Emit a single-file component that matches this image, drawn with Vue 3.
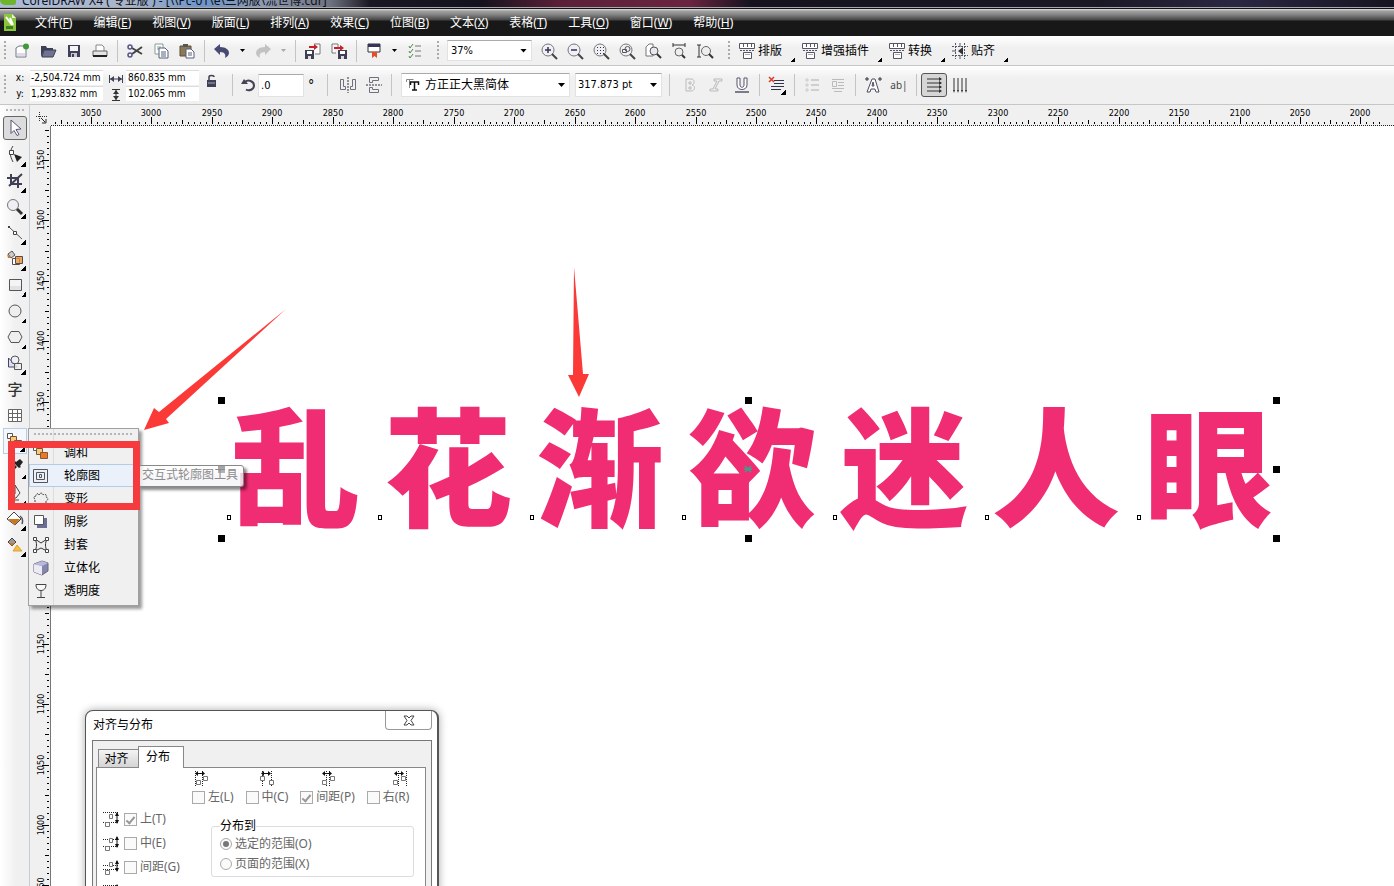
<script setup>
import { computed, h, onBeforeUnmount, onMounted, ref } from 'vue'

const C = '#3f3f55'
const svgs = {
  new: `<path d="M3 6l3-2h7v11H3z" fill="#fff" stroke="#77778a"/><path d="M4 11h8v3H4z" fill="#dcdce6"/><circle cx="13" cy="4.500" r="3" fill="#3f9b35"/>`,
  open: `<path d="M2 4h5l1 2h6v3H5l-3 6z" fill="${C}"/><path d="M5 8h12l-3 7H3z" fill="#6d7390" stroke="${C}"/>`,
  save: `<path d="M3 3h12v12H3z" fill="${C}"/><path d="M5 4h8v5H5z" fill="#f4f4f8"/><path d="M6 11h6v4H6z" fill="#c9c9d6"/><path d="M7 12h2v3H7z" fill="${C}"/>`,
  print: `<path d="M5 9V3h6l2 2v4" fill="#fff" stroke="#888"/><path d="M2 9h14v5H2z" fill="#e5e5e5" stroke="#666"/><path d="M2 14h14" stroke="#222" stroke-width="2"/>`,
  cut: `<path d="M6 6l10 6M6 12l10-7" stroke="#444" stroke-width="2"/><circle cx="4" cy="5" r="2" fill="none" stroke="#55558a" stroke-width="1.500"/><circle cx="4" cy="13" r="2" fill="none" stroke="#55558a" stroke-width="1.500"/>`,
  copy: `<path d="M3 2h8v10H3z" fill="#fff" stroke="#8a9a9a"/><path d="M5 5h4M5 7h3" stroke="#7aa59a"/><path d="M7 6h6l3 3v7H7z" fill="#fff" stroke="#55607c"/><path d="M9 10h5M9 12h5M9 14h5" stroke="#55607c"/>`,
  paste: `<path d="M2 4h11v10H2z" fill="#8a7a5c" stroke="#5c4c33"/><path d="M5 2h5v3H5z" fill="#555"/><path d="M8 7h5l3 3v6H8z" fill="#fff" stroke="#55607c"/><path d="M10 11h4M10 13h4" stroke="#55607c"/>`,
  undo: `<path d="M1 7l6-5v3c6 0 9 3 9 6 0 2-2 4-4 5 1-3 0-6-5-6v3z" fill="#484a72"/>`,
  redo: `<path d="M17 7l-6-5v3C5 5 2 8 2 11c0 2 2 4 4 5-1-3 0-6 5-6v3z" fill="#c2c2c2"/>`,
  import: `<path d="M10 2h6v10h-5" fill="#fff" stroke="#777"/><path d="M1 8h9v9H1z" fill="${C}"/><path d="M3 9h5v3H3z" fill="#fff"/><path d="M4 14h3v3H4z" fill="#ddd"/><path d="M5 4h5V2l4 3-4 3V6H5z" fill="#c8202a"/>`,
  export: `<path d="M2 2h6v3M2 2v9h4" fill="#fff" stroke="#777"/><path d="M8 8h9v9H8z" fill="${C}"/><path d="M10 9h5v3h-5z" fill="#fff"/><path d="M11 14h3v3h-3z" fill="#ddd"/><path d="M4 5h6V3l4 3-4 3V7H4z" fill="#c8202a"/>`,
  launch: `<path d="M3 2h12v8H3z" fill="#fff" stroke="#333"/><path d="M3 2h12v3H3z" fill="#33335c"/><path d="M7 10h5v6l-2.500-2L7 16z" fill="#e0502a"/>`,
  options: `<path d="M9 4h6M9 9h6M9 14h6" stroke="#777"/><path d="M3 4l1 2 3-4M3 9l1 2 3-4M3 14l1 2 3-4" stroke="#4f8a4a" fill="none"/>`,
  zin: mag('<path d="M5 8h6M8 5v6" stroke="#33334d" stroke-width="1.500"/>'),
  zout: mag('<path d="M5 8h6" stroke="#33334d" stroke-width="1.500"/>'),
  zsel: mag('<path d="M5 5.500h7M5 8.500h7M5 11.500h7" stroke="#333" stroke-dasharray="1 2"/>'),
  zall: mag('<path d="M4.500 7.500h4v3h-4z" fill="none" stroke="#555"/><circle cx="9.500" cy="7" r="2.500" fill="none" stroke="#555"/>'),
  zpage: `<path d="M2 14V5l3-3h4v12z" fill="#fff" stroke="#777"/><circle cx="10" cy="9" r="4" fill="#e8e8f0" stroke="#555"/><path d="M13 12l4 4" stroke="#333" stroke-width="2"/>`,
  zwidth: `<path d="M3 3h12M3 1v4M15 1v4" stroke="#333"/><circle cx="9" cy="10" r="4" fill="#eee" stroke="#666"/><path d="M12 13l3 3" stroke="#333" stroke-width="2"/>`,
  zheight: `<path d="M3 3v12M1 3h4M1 15h4" stroke="#333"/><circle cx="10" cy="9" r="4.500" fill="#eee" stroke="#666"/><path d="M13 12l4 4" stroke="#333" stroke-width="2"/>`,
  plug: `<path d="M1.500 1.500h15v5h-15zM5.500 10.500h8v6h-8z" fill="#fff" stroke="#555566"/><path d="M5.500 2v3M9.500 2v3M13.500 2v3" stroke="#555566"/><path d="M2 8.500h14" stroke="#555566" stroke-dasharray="2 1"/><path d="M7 12.500h5" stroke="#aab"/>`,
  snap: `<path d="M4.500 1v16M13.500 1v16M1 4.500h16M1 13.500h16" stroke="#55556a" stroke-dasharray="2 1"/><path d="M9 1v4M9 13v4M1 9h4" stroke="#55556a"/><path d="M12 5v8L7 9z" fill="#333"/>`,
  hsize: `<path d="M3 9h12M2.500 5v8M15.500 5v8" stroke="${C}"/><path d="M3 9l4-3v6zM15 9l-4-3v6z" fill="${C}"/>`,
  vsize: `<path d="M9 4v10M5 3.500h8M5 14.500h8" stroke="#333"/><path d="M9 4L6 8h6zM9 14l-3-4h6z" fill="#333"/>`,
  lock: `<path d="M4 8h9v7H4z" fill="${C}"/><path d="M6 8V5c0-2 5-2 5 0" fill="none" stroke="${C}" stroke-width="1.500"/><path d="M5 11h7" stroke="#aab"/>`,
  rotate: `<path d="M5 6c3-3 9-1 9 3.500 0 4-5 6-8 4" fill="none" stroke="#444455" stroke-width="2"/><path d="M1 8l7 0-4-5z" fill="#444455"/>`,
  mirrorh: `<path d="M1.500 3.500v10h5v-3h-2v-7zM16.500 3.500v10h-5v-3h2v-7z" stroke="#70707c"/><path d="M9 1v16" stroke="#333" stroke-dasharray="2 1"/>`,
  mirrorv: `<path d="M13.500 1.500h-9v5h3v-2h6zM13.500 16.500h-9v-5h3v2h6z" stroke="#70707c"/><path d="M1 9h16" stroke="#333" stroke-dasharray="2 1"/>`,
  bold: `<path d="M5 3h5c4 0 4 5 1 6 4 1 3 6-1 6H5zM8 6v2h2V6zM8 11v2h2v-2z" fill="none" stroke="#bbb"/>`,
  italic: `<path d="M7 3h8v2h-3l-4 8h3v2H3v-2h3l4-8H7z" fill="none" stroke="#bbb"/>`,
  under: `<path d="M4 2h3v7c0 3 4 3 4 0V2h3v7c0 6-10 6-10 0z" fill="#fff" stroke="#55556d"/><path d="M2 16h14" stroke="#55556d" stroke-width="1.500"/>`,
  align: `<path d="M6 4.500h10M6 7.500h10M3 10.500h13M3 13.500h10" stroke="#33334d"/><path d="M1 1l5 5M6 1L1 6" stroke="#dd3b22" stroke-width="1.500"/>`,
  bullets: `<path d="M3 3h2v2H3zM3 8h2v2H3zM3 13h2v2H3z" fill="none" stroke="#ccc"/><path d="M8 4h8M8 9h8M8 14h8" stroke="#c4c4c4" stroke-width="1.500"/>`,
  dropcap: `<path d="M3 3.500h12M9 6.500h6M9 9.500h6M3 12.500h12M5 15.500h8" stroke="#bbb"/><path d="M3.500 5.500h4v5h-4z" fill="none" stroke="#bbb"/>`,
  charfmt: `<path d="M3 16L8 3h3l4 13h-3l-1-3H7l-1 3zM8 10h2L9 6z" fill="#fff" stroke="#4d4d62"/><path d="M1 3h4M3 1v4M14 3h4M16 1v4" stroke="#333"/>`,
  htext: `<path d="M2 3h14M2 7h14M2 11h14M2 15h14" stroke="#333"/><path d="M14 1l3 2-3 2zM14 5l3 2-3 2zM14 9l3 2-3 2zM14 13l3 2-3 2z" fill="#333"/>`,
  vtext: `<path d="M3 2v13M7 2v13M11 2v13M15 2v13" stroke="#333"/><path d="M2 14h2l-1 3zM6 14h2l-1 3zM10 14h2l-1 3zM14 14h2l-1 3z" fill="#333"/>`,
  pick: `<path d="M5 1l10 9-5 .5 3 5-2 1-3-5-3 3z" fill="#fff" stroke="#55557a"/>`,
  shape: `<path d="M7 0C3 6 4 10 7 16" fill="none" stroke="#444"/><path d="M3.500 4.500h4v4h-4z" fill="#fff" stroke="#444"/><path d="M8 8l8 3-5 5z" fill="#222"/>`,
  crop: `<path d="M1 6h11v10M5 2v10h11M3 14L16 2" fill="none" stroke="${C}" stroke-width="2"/>`,
  lens: `<circle cx="7" cy="7" r="5.500" fill="#eef0f4" stroke="#777"/><path d="M11 11l5 5" stroke="#333" stroke-width="3"/>`,
  free: `<path d="M3 3l13 12" stroke="#555"/><path d="M7.500 7.500h3v3h-3z" fill="#fff" stroke="#444"/><path d="M2 2h2v2H2z" fill="#444"/>`,
  smart: `<path d="M2 4l4-3 3 4-4 3z" fill="#ccc" stroke="#555"/><path d="M1 4l4 4-3 0z" fill="#cf7a2a"/><path d="M6.500 8.500h7v6h-7z" fill="#fff" stroke="#5a4a4a"/><path d="M9.500 6.500h7v7h-7z" fill="#e9953f" fill-opacity=".8" stroke="#5a4a4a"/>`,
  rect: `<path d="M3.500 3.500h12v11h-12z" fill="#f4f4f4" stroke="#555"/><path d="M4 10h11v4H4z" fill="#e2e2e6"/>`,
  ellipse: `<circle cx="9" cy="9" r="6" fill="#eee" stroke="#555"/>`,
  poly: `<path d="M5 3.500h8l3 5.500-3 5.500H5L2 9z" fill="#eee" stroke="#555"/>`,
  basic: `<path d="M2.500 4v9h9z" fill="#dfe0ec" stroke="#44446a"/><circle cx="9" cy="6" r="4" fill="#eef" fill-opacity=".7" stroke="#555"/><path d="M8.500 9.500h7v6h-7z" fill="#eee" fill-opacity=".8" stroke="#555"/>`,
  table: `<path d="M2.500 3.500h13v12h-13zM2 7.500h14M2 11.500h14M6.500 3v12M11.500 3v12" fill="#fff" stroke="#666"/>`,
  blend: `<path d="M1.500 1.500h5v5h-5z" fill="#fff" stroke="#555"/><path d="M4.500 4.500h6v6h-6z" fill="#f7c97b" stroke="#775533"/><path d="M8.500 8.500h7v6h-7z" fill="#ea7a1c" stroke="#885544"/>`,
  dropper: `<path d="M10 4l4-3 3 3-3 4 1 1-2 1-5-5 1-2zM9 7l2 2-6 6-3 1 1-3z" fill="#222"/>`,
  outline: `<path d="M9 1l5 8-4 5H8L5 9z" fill="#eee" stroke="#444"/><path d="M9 2v8M5 16h8" stroke="#444"/>`,
  fill: `<path d="M1 9l7-7 7 7-6 6z" fill="#fff" stroke="#444"/><path d="M2 9h12l-5 6z" fill="#c9771f"/><path d="M14 6c3 2 3 5 2 8" stroke="#555" fill="none" stroke-width="1.500"/>`,
  ifill: `<path d="M2 6l4-4 4 4-4 4z" fill="#999" stroke="#444"/><path d="M3 7l6 0-3 3z" fill="#c9771f"/><path d="M7 15l4-6 5 6z" fill="#f2c040" stroke="#d9a336"/>`,
  contour: `<path d="M1.500 2.500h14v13h-14zM4.500 5.500h8v7h-8zM7.500 7.500h2v3h-2z" fill="none" stroke="#555"/>`,
  distort: `<path d="M3 15V9c-2-1-1-3 1-3 0-3 3-3 3-1 1-3 4-2 4 0 2-2 4 0 3 2 3 1 2 3 0 4v4z" fill="#eee" stroke="#444" stroke-dasharray="2 1"/>`,
  shadow: `<path d="M5 5h10v10H5z" fill="#6d6e98"/><path d="M2.500 2.500h9v9h-9z" fill="#fff" stroke="#555"/>`,
  envelope: `<path d="M3 3l6 4 6-4c-2 4-2 8 0 12l-6-3-6 3c2-4 2-8 0-12z" fill="#eee" stroke="#333"/><path d="M1.500 1.500h3v3h-3zM13.500 1.500h3v3h-3zM1.500 13.500h3v3h-3zM13.500 13.500h3v3h-3z" fill="#fff" stroke="#444"/>`,
  extrude: `<path d="M2 5l8-3 6 2v8l-6 4-8-3z" fill="#8587ad" stroke="#666677"/><path d="M2 5l8 2v9l-8-3z" fill="#eceaf4"/><path d="M2 5l8-3 6 2-6 3z" fill="#b9badb"/>`,
  glass: `<path d="M4 2.500h10c0 4-2 6-5 6s-5-2-5-6zM9 9v6M5 15.500h8" fill="#f8f8f8" stroke="#444"/>`,
  origin: `<path d="M4.500 1v10M1 5.500h12" stroke="#333" stroke-dasharray="1 1"/><path d="M6 7l4 4M11 8v4H7" fill="none" stroke="#222"/>`,
  dl: dist('<path d="M3.500 1v16M10.500 1v16"', '<path d="M4.500 10.500h4v4h-4zM11.500 6.500h4v4h-4z"'),
  dc: dist('<path d="M4.500 1v16M13.500 1v16"', '<path d="M2.500 6.500h4v4h-4zM11.500 10.500h4v4h-4z"'),
  dg: dist('<path d="M7.500 1v16M10.500 1v16"', '<path d="M3.500 10.500h4v4h-4zM11.500 6.500h4v4h-4z"'),
  dr: dist('<path d="M7.500 1v16M15.500 1v16"', '<path d="M2.500 10.500h4v4h-4zM10.500 6.500h4v4h-4z"'),
  dt: vdist(2, 12), dm: vdist(5, 12), ds: vdist(7, 11), db: vdist(3, 13),
}
function mag(inner) {
  return `<circle cx="8" cy="8" r="6" fill="#f0f0f6" stroke="#777"/><path d="M12 12l5 5" stroke="#444" stroke-width="2"/>${inner}`
}
function dist(lines, boxes) {
  return `${lines} stroke="#222" stroke-dasharray="1 1"/>${boxes} fill="#fff" stroke="#777"/><path d="M4 3.500h8" stroke="#111"/><path d="M6 1L3 3.500 6 6zM10 1l3 2.500L10 6z" fill="#111"/>`
}
function vdist(a, b) {
  return `<path d="M1 ${a}.5h16M1 ${b}.5h16" stroke="#222" stroke-dasharray="1 1"/><path d="M7.500 4.500h3v4h-3zM3.500 12.500h4v4h-4z" fill="#fff" stroke="#777"/><path d="M15 3v10" stroke="#111"/><path d="M13 6l2-4 2 4zM13 10l2 4 2-4z" fill="#111"/>`
}
const Icon = (p) => h('svg', {
  width: 18, height: 18, viewBox: '0 0 18 18', fill: 'none', 'aria-hidden': 'true', innerHTML: svgs[p.name],
})
Icon.props = ['name']

const menus = [
  ['文件', 'F'], ['编辑', 'E'], ['视图', 'V'], ['版面', 'L'], ['排列', 'A'], ['效果', 'C'],
  ['位图', 'B'], ['文本', 'X'], ['表格', 'T'], ['工具', 'O'], ['窗口', 'W'], ['帮助', 'H'],
]
const zooms = ['zin', 'zout', 'zsel', 'zall', 'zpage', 'zwidth', 'zheight']
const plugins = [['plug', '排版'], ['plug', '增强插件'], ['plug', '转换'], ['snap', '贴齐']]
const tools = [
  'pick', 'shape', 'crop', 'lens', 'free', 'smart', 'rect', 'ellipse', 'poly', 'basic',
  'text', 'table', 'blend', 'dropper', 'outline', 'fill', 'ifill',
]
const plain = ['pick', 'text', 'table']
const flyout = [
  ['blend', '调和'], ['contour', '轮廓图'], ['distort', '变形'], ['shadow', '阴影'],
  ['envelope', '封套'], ['extrude', '立体化'], ['glass', '透明度'],
]
const headline = [...'乱花渐欲迷人眼']
const nodes = [229, 380, 532, 684, 835, 987, 1139]
const handles = [[221, 400], [748, 400], [1276, 400], [221, 469], [1276, 469], [221, 538], [748, 538], [1276, 538]]

const STEP = 60.45
const RULER = 20
const view = ref({ w: window.innerWidth, h: window.innerHeight })
const measure = () => { view.value = { w: window.innerWidth, h: window.innerHeight } }
onMounted(() => window.addEventListener('resize', measure))
onBeforeUnmount(() => window.removeEventListener('resize', measure))

function ruler(first, start, length) {
  const labels = []
  const ticks = []
  for (let i = 0; first + i * STEP < length; i++) {
    labels.push({ at: Math.round(first + i * STEP), value: start - i * 50 })
  }
  for (let i = -10; first + (i * STEP) / 10 < length; i++) {
    const at = Math.round(first + (i * STEP) / 10)
    if (at >= 0) ticks.push({ at, len: i % 10 === 0 ? 7 : i % 5 === 0 ? 4 : 2 })
  }
  return { labels, ticks }
}
const top = computed(() => ruler(40, 3050, view.value.w - 62))
const side = computed(() => ruler(34, 1550, view.value.h - 126))
const topTicks = computed(() => top.value.ticks.map((t) => `M${t.at}.5 ${RULER - 1 - t.len}v${t.len}`).join(''))
const sideTicks = computed(() => side.value.ticks.map((t) => `M${RULER - 1 - t.len} ${t.at}.5h${t.len}`).join(''))

const across = [
  { id: 'l', icon: 'dl', text: '左(L)' }, { id: 'c', icon: 'dc', text: '中(C)' },
  { id: 'p', icon: 'dg', text: '间距(P)', on: true }, { id: 'r', icon: 'dr', text: '右(R)' },
]
const down = [
  { id: 't', icon: 'dt', text: '上(T)', on: true }, { id: 'e', icon: 'dm', text: '中(E)' },
  { id: 'g', icon: 'ds', text: '间距(G)' },
]
</script>

<template>
  <div class="app">
    <header class="title">
      <span class="logo"></span>
      <span class="caption">CorelDRAW X4   ( 专业版 )  - [\\Pc-01\e\三网版\流世博.cdr]</span>
    </header>

    <nav class="menubar">
      <svg class="doc" width="12" height="17" viewBox="0 0 12 17" aria-hidden="true">
        <path d="M0 0h8l4 4v13H0z" fill="#8cc63e" />
        <path d="M8 0v4h4z" fill="#e8f5d0" />
        <path d="M2 3l6 8M6 4l3 7" stroke="#fff" stroke-width="2" />
        <path d="M2 12h7v3H2z" fill="#3f7d22" />
      </svg>
      <button v-for="m in menus" :key="m[0]">{{ m[0] }}(<u>{{ m[1] }}</u>)</button>
    </nav>

    <div class="bar standard">
      <i class="grip"></i>
      <button class="ib" aria-label="新建"><Icon name="new" /></button>
      <button class="ib" aria-label="打开"><Icon name="open" /></button>
      <button class="ib" aria-label="保存"><Icon name="save" /></button>
      <button class="ib" aria-label="打印"><Icon name="print" /></button>
      <i class="sep"></i>
      <button class="ib" aria-label="剪切"><Icon name="cut" /></button>
      <button class="ib" aria-label="复制"><Icon name="copy" /></button>
      <button class="ib" aria-label="粘贴"><Icon name="paste" /></button>
      <i class="sep"></i>
      <button class="ib" aria-label="撤消"><Icon name="undo" /></button>
      <button class="drop" aria-label="撤消列表"></button>
      <button class="ib" aria-label="重做"><Icon name="redo" /></button>
      <button class="drop dim" aria-label="重做列表"></button>
      <i class="sep"></i>
      <button class="ib" aria-label="导入"><Icon name="import" /></button>
      <button class="ib" aria-label="导出"><Icon name="export" /></button>
      <i class="sep"></i>
      <button class="ib" aria-label="应用程序启动器"><Icon name="launch" /></button>
      <button class="drop" aria-label="应用程序列表"></button>
      <button class="ib" aria-label="选项"><Icon name="options" /></button>
      <i class="grip mid"></i>
      <label class="combo level"><select aria-label="缩放级别"><option>37%</option></select></label>
      <button v-for="z in zooms" :key="z" class="ib" :aria-label="z"><Icon :name="z" /></button>
      <i class="grip mid last"></i>
      <button v-for="p in plugins" :key="p[1]" class="plugin"><Icon :name="p[0]" />{{ p[1] }}</button>
    </div>

    <div class="bar property">
      <i class="grip"></i>
      <div class="pair pos">
        <label for="px">x:</label><input id="px" value="-2,504.724 mm" />
        <label for="py">y:</label><input id="py" value="1,293.832 mm" />
      </div>
      <div class="pair size">
        <label for="sw" aria-label="宽度"><Icon name="hsize" /></label><input id="sw" value="860.835 mm" />
        <label for="sh" aria-label="高度"><Icon name="vsize" /></label><input id="sh" value="102.065 mm" />
      </div>
      <button class="ib lock" aria-label="锁定比率"><Icon name="lock" /></button>
      <i class="sep wide"></i>
      <label class="angle"><Icon name="rotate" /><input value=".0" aria-label="旋转角度" /><span>°</span></label>
      <i class="sep wide"></i>
      <button class="ib" aria-label="水平镜像"><Icon name="mirrorh" /></button>
      <button class="ib" aria-label="垂直镜像"><Icon name="mirrorv" /></button>
      <i class="sep"></i>
      <label class="combo font">
        <svg class="tt" width="14" height="14" viewBox="0 0 14 14" aria-hidden="true">
          <path d="M0.500 4V1.500h7M3.500 2v8" fill="none" stroke="#888" />
          <path d="M4.500 7V4h8v3M8.500 4v8M6 12h5" fill="none" stroke="#111" stroke-width="1.500" />
        </svg>
        <select aria-label="字体"><option>方正正大黑简体</option></select>
      </label>
      <label class="combo points"><select aria-label="字号"><option>317.873 pt</option></select></label>
      <i class="sep wide"></i>
      <button class="ib" aria-label="粗体"><Icon name="bold" /></button>
      <button class="ib" aria-label="斜体"><Icon name="italic" /></button>
      <button class="ib" aria-label="下划线"><Icon name="under" /></button>
      <i class="sep"></i>
      <button class="ib more" aria-label="对齐"><Icon name="align" /></button>
      <i class="sep"></i>
      <button class="ib" aria-label="项目符号"><Icon name="bullets" /></button>
      <button class="ib" aria-label="首字下沉"><Icon name="dropcap" /></button>
      <i class="sep"></i>
      <button class="ib" aria-label="字符格式"><Icon name="charfmt" /></button>
      <button class="ib abl" aria-label="编辑文本">ab|</button>
      <i class="sep"></i>
      <button class="ib on" aria-label="水平文本"><Icon name="htext" /></button>
      <button class="ib" aria-label="垂直文本"><Icon name="vtext" /></button>
    </div>

    <div class="main">
      <aside class="toolbox">
        <i class="dots"></i>
        <button
          v-for="(t, i) in tools"
          :key="t"
          class="tool"
          :class="{ picked: i === 0, hot: i === 12, more: !plain.includes(t) }"
          :aria-label="t"
        >
          <span v-if="t === 'text'" class="zi">字</span>
          <Icon v-else :name="t" />
        </button>
      </aside>

      <div class="work">
        <div class="origin"><Icon name="origin" /></div>
        <svg class="hruler" aria-hidden="true">
          <path :d="topTicks" stroke="#000" />
          <text v-for="l in top.labels" :key="l.value" :x="l.at" y="11">{{ l.value }}</text>
        </svg>
        <svg class="vruler" aria-hidden="true">
          <path :d="sideTicks" stroke="#000" />
          <text v-for="l in side.labels" :key="l.value" :transform="`translate(14 ${l.at}) rotate(-90)`">{{ l.value }}</text>
        </svg>

        <main class="canvas">
          <h1 class="headline"><span v-for="c in headline" :key="c">{{ c }}</span></h1>
          <svg class="marks" aria-hidden="true">
            <g transform="translate(-51 -126)">
              <rect v-for="(p, i) in handles" :key="i" :x="p[0] - 3" :y="p[1] - 3" width="7" height="7" />
              <rect v-for="n in nodes" :key="n" :x="n - 1.5" y="515.500" width="3" height="4" fill="#fff" stroke="#000" />
              <path d="M745 466l6 6M751 466l-6 6M744 469h8" stroke="#3f9f8f" stroke-width="1.500" />
              <path d="M144 430l10-22 5 4L286 309 166 419l3 4z" fill="#fb3a37" />
              <path d="M574 267l9 107h6l-10 23-11-22h5z" fill="#fb3a37" />
            </g>
          </svg>
        </main>
      </div>
    </div>

    <div class="flyout" role="menu">
      <i class="dots"></i>
      <button v-for="(f, i) in flyout" :key="f[1]" role="menuitem" :class="{ hover: i === 1 }">
        <Icon :name="f[0]" /><span>{{ f[1] }}</span>
      </button>
    </div>
    <div class="tip" role="tooltip">交互式轮廓图工具</div>
    <div class="frame"></div>

    <section class="dialog" role="dialog" aria-labelledby="dt">
      <header>
        <h2 id="dt">对齐与分布</h2>
        <button class="close" aria-label="关闭">
          <svg width="12" height="11" viewBox="0 0 12 11" aria-hidden="true">
            <path d="M1 1h3l2 2 2-2h3L8 5.500 11 10H8L6 8l-2 2H1l3-4.500z" fill="#fff" stroke="#444" />
          </svg>
        </button>
      </header>
      <div class="client">
        <div class="tabs" role="tablist">
          <button role="tab">对齐</button>
          <button role="tab" class="current">分布</button>
        </div>
        <div class="panel">
          <div class="across">
            <label v-for="a in across" :key="a.id" :class="a.id">
              <Icon :name="a.icon" />
              <span><input type="checkbox" :checked="a.on" disabled />{{ a.text }}</span>
            </label>
          </div>
          <div class="lower">
            <div class="down">
              <label v-for="d in down" :key="d.id">
                <Icon :name="d.icon" /><input type="checkbox" :checked="d.on" disabled />{{ d.text }}
              </label>
              <Icon name="db" />
            </div>
            <fieldset>
              <legend>分布到</legend>
              <label><input type="radio" name="to" checked disabled />选定的范围(O)</label>
              <label><input type="radio" name="to" disabled />页面的范围(X)</label>
            </fieldset>
          </div>
        </div>
      </div>
    </section>
  </div>
</template>

<style>
body { margin: 0; overflow: hidden; }
</style>

<style scoped>
.app {
  position: relative;
  display: flex;
  flex-direction: column;
  height: 100vh;
  overflow: hidden;
  background: #f0f0f0;
  color: #000;
  font: 12px/16px "Noto Sans", "Noto Sans CJK SC", sans-serif;
}
*, *::before, *::after { box-sizing: border-box; }
button, input, select { margin: 0; padding: 0; border: 0; background: none; font: inherit; color: inherit; }
svg { flex: none; display: block; }

.title {
  flex: none;
  display: flex;
  align-items: flex-end;
  height: 9px;
  overflow: hidden;
  border-bottom: 1px solid #111;
  box-shadow: inset 0 -1px #a5a5ad;
  background: linear-gradient(90deg, #a9bcdb 0, #a8b4c8 130px, #6b95cc 200px, #8d9bb2 260px, #6f7380 330px, #191722 370px, #14121c 480px, #5b2038 560px, #6a2440 690px, #16131f 750px, #1b1826 1100px, #2a2742 1235px, #171421);
}
.logo { width: 16px; height: 5px; margin-bottom: 3px; background: #6fb52c; border-radius: 0 0 3px 6px; }
.caption { margin: 0 0 1px 6px; line-height: 13px; white-space: pre; color: #101018; }

.menubar {
  flex: none;
  display: flex;
  align-items: center;
  gap: 21px;
  height: 27px;
  padding-left: 4px;
  color: #fff;
  background: linear-gradient(#e0e0e0 0, #a2a2a2 2px, #8a8a8a 5px, #454545 11px, #181818 12px);
}
.doc { margin-right: -2px; }
.menubar button { white-space: nowrap; }

.bar {
  flex: none;
  display: flex;
  align-items: center;
  border-bottom: 1px solid #c6c6c6;
  background: linear-gradient(#fff, #f0f0f0 12px);
}
.standard { height: 30px; }
.property { height: 39px; }
.grip {
  flex: none;
  width: 2px;
  height: 20px;
  margin: 0 3px 0 4px;
  background: repeating-linear-gradient(#aaa 0 2px, transparent 2px 4px);
}
.grip.mid { margin: 0 8px 0 9px; }
.grip.last { margin-left: 10px; }
.sep { flex: none; width: 1px; height: 22px; margin: 0 4px; background: #c4c4c4; }
.sep.wide { margin: 0 7px; }
.ib { flex: none; position: relative; display: grid; place-items: center; width: 26px; height: 24px; }
.ib.on { border: 1px solid #555; border-radius: 3px; background: #d6d6d6; }
.ib.more::after, .tool.more::after {
  content: "";
  position: absolute;
  right: 4px;
  bottom: 2px;
  width: 5px;
  height: 5px;
  background: linear-gradient(135deg, transparent 50%, #000 50%);
}
.drop { flex: none; width: 15px; height: 20px; }
.drop::before, .combo::after {
  content: "";
  display: block;
  width: 7px;
  height: 4px;
  margin: auto;
  background: #000;
  clip-path: polygon(0 0, 100% 0, 50% 100%);
}
.drop::before { width: 5px; height: 3px; }
.drop.dim::before { background: #aaa; }
.combo {
  flex: none;
  display: flex;
  align-items: center;
  height: 21px;
  padding-right: 4px;
  border: 1px solid #e2e2e2;
  border-top-color: #aaa;
  background: #fff;
  font-family: "DejaVu Sans Condensed", "Noto Sans CJK SC", sans-serif;
  font-size: 11px;
}
.combo select { flex: 1; min-width: 0; padding-left: 3px; appearance: none; }
.combo::after { flex: none; }
.level { width: 85px; margin-right: 4px; }
.plugin { flex: none; position: relative; display: flex; align-items: center; gap: 2px; height: 24px; margin-right: 6px; padding-right: 13px; white-space: nowrap; }
.plugin::after {
  content: "";
  position: absolute;
  right: 0;
  bottom: 1px;
  width: 4px;
  height: 4px;
  background: linear-gradient(135deg, transparent 50%, #000 50%);
}

.pair { flex: none; display: grid; row-gap: 1px; font: 10px/15px "DejaVu Sans Condensed", sans-serif; }
.pair input { width: 100%; height: 15px; padding-left: 2px; border-top: 1px solid #ddd; background: #fff; }
.pair label { display: grid; align-items: center; justify-content: center; height: 15px; overflow: hidden; }
.pos { grid-template-columns: 20px 73px; margin-left: 1px; }
.size { grid-template-columns: 20px 73px; margin-left: 3px; }
.pos input { padding-left: 1px; }
.lock { margin-bottom: 8px; }
.angle { display: flex; align-items: center; font: 11px/16px "DejaVu Sans Condensed", sans-serif; }
.angle input { width: 46px; height: 23px; padding-left: 2px; border: 1px solid #e2e2e2; border-top-color: #aaa; background: #fff; }
.angle span { margin-left: 4px; width: 12px; font-size: 14px; }
.font { width: 169px; height: 24px; margin: 0 5px; padding-left: 4px; font-size: 12px; }
.tt { margin-right: 2px; }
.points { width: 87px; height: 24px; }
.points select { padding-left: 2px; }
.abl { font-size: 10px; color: #444; }

.main { flex: 1; display: flex; min-height: 0; }
.toolbox {
  flex: none;
  width: 30px;
  padding: 4px 0 0 3px;
  border-right: 1px solid #c8ccd4;
  background: linear-gradient(90deg, #fff, #f0f0f0 16px);
}
.dots { display: block; height: 2px; background: repeating-linear-gradient(90deg, #b5b5b5 0 2px, transparent 2px 4px); }
.toolbox .dots { width: 18px; margin: 0 0 5px 3px; }
.tool { position: relative; display: grid; place-items: center; width: 24px; height: 26px; }
.tool.more::after { right: 1px; bottom: 1px; }
.tool.picked { height: 24px; margin: 0 0 2px; border: 1px solid #666; border-radius: 3px; background: #dcdcdc; }
.tool.hot { border: 1px solid #b5cfe8; background: #f4f8fc; }
.zi { font-size: 15px; font-weight: 500; color: #333; }

.work { flex: 1; display: grid; grid-template: 21px 1fr / 21px 1fr; min-width: 0; }
.origin { padding: 6px 0 0 5px; overflow: hidden; }
.hruler { width: 100%; height: 21px; border-bottom: 1px dotted #222; }
.vruler { width: 21px; height: 100%; border-right: 1px solid #777; }
.hruler text, .vruler text { font: 9px "DejaVu Sans Condensed", sans-serif; text-anchor: middle; }
.canvas { position: relative; min-width: 0; overflow: hidden; background: #fff; }
.headline {
  position: absolute;
  left: 169px;
  top: 261px;
  display: grid;
  grid-template-columns: repeat(7, 152px);
  margin: 0;
  color: #f02c72;
  font: 900 128px/150px "Noto Sans CJK SC", sans-serif;
  text-align: center;
}
.marks { position: absolute; inset: 0; width: 100%; height: 100%; }

.flyout {
  position: absolute;
  left: 28px;
  top: 428px;
  width: 111px;
  padding-bottom: 3px;
  border: 1px solid #a0a0a0;
  background: linear-gradient(90deg, #f0f0f0 24px, #dcdcdc 24px 25px, #f0f0f0 25px);
  box-shadow: 3px 3px 3px #0006;
}
.flyout .dots { margin: 4px 5px 6px; }
.flyout button { display: flex; align-items: center; gap: 14px; width: 100%; height: 23px; padding-left: 3px; text-align: left; }
.flyout button.hover { border: 1px solid #b4cbe6; background: #eaf1fa; padding-left: 2px; }
.tip {
  position: absolute;
  left: 138px;
  top: 465px;
  padding: 1px 5px 3px 3px;
  border: 1px solid #888;
  border-radius: 3px;
  background: linear-gradient(#ffffffa0, #f4f4f8d0 60%);
  box-shadow: 3px 3px 3px #0007;
  color: #8c8c8c;
  white-space: nowrap;
}
.frame { position: absolute; left: 8px; top: 441px; width: 132px; height: 69px; border: 7px solid #f53b3d; }

.dialog {
  position: absolute;
  left: 85px;
  top: 710px;
  width: 354px;
  padding: 0 5px 0 6px;
  border: 2px solid #555;
  border-width: 1px 2px 1px 1px;
  border-radius: 8px 8px 0 0;
  background: #fff;
  box-shadow: 0 0 8px #0005;
}
.dialog header { display: flex; justify-content: space-between; height: 29px; }
.dialog h2 { margin: 6px 0 0 1px; font: inherit; }
.close { display: grid; place-items: center; width: 47px; height: 19px; border: 1px solid #999; border-top: 0; border-radius: 0 0 4px 4px; }
.client { padding: 5px 5px 0 3px; border: 1px solid #777; background: #f0f0f0; }
.tabs { display: flex; align-items: flex-end; padding-left: 2px; }
.tabs button { width: 41px; height: 18px; padding-right: 4px; border: 1px solid #888; border-bottom: 0; background: linear-gradient(#f4f4f4, #d4d4d4); }
.tabs .current { width: 46px; height: 22px; margin: 0 0 -1px -1px; padding: 0 6px 2px 0; background: #fff; }
.panel { height: 170px; padding: 2px 0 0 5px; border: 1px solid #888; background: #fff; color: #666; }
.across { display: flex; gap: 12px; padding-left: 90px; }
.across label { display: grid; row-gap: 1px; justify-items: center; }
.across .l { justify-items: start; }
.across .r { justify-items: end; }
.across span { display: flex; align-items: center; gap: 3px; white-space: nowrap; }
.lower { display: grid; grid-template-columns: 109px 203px; align-items: start; padding-top: 2px; }
.down { display: grid; row-gap: 6px; padding-top: 3px; }
.down label { display: flex; align-items: center; gap: 3px; height: 18px; }
.down label svg { margin-right: 1px; }
fieldset { min-width: 0; margin: 11px 0 0; padding: 0 0 2px 8px; border: 1px solid #dcdcdc; border-radius: 3px; }
legend { padding: 0; color: #000; }
fieldset label { display: flex; align-items: center; gap: 3px; height: 20px; }
input[type="checkbox"], input[type="radio"] {
  flex: none;
  display: grid;
  place-items: center;
  width: 13px;
  height: 13px;
  appearance: none;
  border: 1px solid #aaa;
  background: #fafafa;
}
input[type="radio"] { width: 12px; height: 12px; border-radius: 50%; }
input[type="radio"]:checked::before { content: ""; width: 6px; height: 6px; border-radius: 50%; background: #777; }
input[type="checkbox"]:checked::before {
  content: "";
  width: 5px;
  height: 9px;
  border: solid #999;
  border-width: 0 2px 2px 0;
  transform: rotate(40deg);
}
</style>
